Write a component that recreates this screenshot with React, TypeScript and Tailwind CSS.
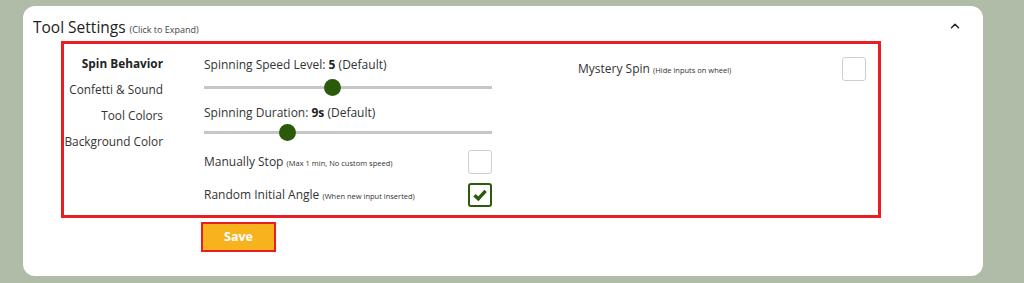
import { ChevronUp } from 'lucide-react';

const MENU = ['Spin Behavior', 'Confetti & Sound', 'Tool Colors', 'Background Color'];

function Slider({ thumb }: { thumb: string }) {
  return (
    <div className="relative h-[3px] w-[288px] bg-[#c6c6c6]">
      <div className={`absolute top-[-7px] h-[17px] w-[17px] rounded-full bg-[#2c5a0b] ${thumb}`} />
    </div>
  );
}

function Box({ checked = false }: { checked?: boolean }) {
  return (
    <div
      className={
        checked
          ? 'flex h-[24px] w-[24px] items-center justify-center rounded-[3px] border-2 border-[#2c5a0b] bg-white'
          : 'h-[24px] w-[24px] rounded-[3px] border border-[#cfcfcf] bg-white'
      }
    >
      {checked && (
        <svg width="14" height="12" viewBox="0 0 14 12">
          <path d="M1.5 6.2 L5.3 9.8 L12.6 1.8" fill="none" stroke="#2c5a0b" strokeWidth="3.4" strokeLinejoin="miter" />
        </svg>
      )}
    </div>
  );
}

export default function App() {
  return (
    <div
      className="h-[283px] w-[1024px] bg-[#b1bca8] pl-[23px] pt-[6px] text-[#333]"
      style={{ fontFamily: '"Open Sans", "Noto Sans", sans-serif' }}
    >
      <div className="flex h-[270px] w-[960px] flex-col rounded-xl bg-white">
        {/* Header */}
        <div className="flex h-[35px] items-end justify-between pl-[10px] pr-[21px]">
          <div className="mb-[3px] flex items-baseline gap-1">
            <span className="text-[15.5px] leading-[22px] text-[#222]">Tool Settings</span>
            <span className="text-[9px] text-[#444]">(Click to Expand)</span>
          </div>
          <ChevronUp size={14} strokeWidth={2.5} className="mb-[8px] text-[#222]" />
        </div>

        {/* Settings panel */}
        <div className="ml-[38px] flex h-[177px] w-[820px] border-[3px] border-[#ea1c24]">
          <div className="flex w-[99px] flex-col items-end pt-[6px] text-[11.8px]">
            {MENU.map((m, i) => (
              <div
                key={m}
                className={
                  i === 0
                    ? 'h-[26px] whitespace-nowrap leading-[26px] font-bold text-[#222]'
                    : 'h-[26px] whitespace-nowrap leading-[26px]'
                }
              >
                {m}
              </div>
            ))}
          </div>

          <div className="ml-[41px] flex w-[288px] flex-col pt-[11px] text-[12px]">
            <div className="h-[20px] leading-[20px]">
              Spinning Speed Level: <b className="text-[#222]">5</b> (Default)
            </div>
            <div className="flex h-[24px] items-center">
              <Slider thumb="left-[120px]" />
            </div>
            <div className="mt-[4px] h-[20px] leading-[20px]">
              Spinning Duration: <b className="text-[#222]">9s</b> (Default)
            </div>
            <div className="flex h-[18px] items-center">
              <Slider thumb="left-[75px]" />
            </div>
            <div className="mt-[9px] flex h-[24px] items-center justify-between">
              <span className="whitespace-nowrap">
                Manually Stop <span className="text-[7.5px]">(Max 1 min, No custom speed)</span>
              </span>
              <Box />
            </div>
            <div className="mt-[9px] flex h-[24px] items-center justify-between">
              <span className="whitespace-nowrap">
                Random Initial Angle <span className="text-[7.5px]">(When new input inserted)</span>
              </span>
              <Box checked />
            </div>
          </div>

          <div className="ml-[86px] flex w-[288px] flex-col pt-[13px] text-[12px]">
            <div className="flex h-[24px] items-center justify-between">
              <span className="whitespace-nowrap">
                Mystery Spin <span className="text-[7.5px]">(Hide inputs on wheel)</span>
              </span>
              <Box />
            </div>
          </div>
        </div>

        <div className="ml-[178px] mt-[4px]">
          <button className="h-[30px] w-[75px] border-2 border-[#ea1c24] bg-[#f6b31e] text-[12.5px] font-bold text-white">
            Save
          </button>
        </div>
      </div>
    </div>
  );
}
